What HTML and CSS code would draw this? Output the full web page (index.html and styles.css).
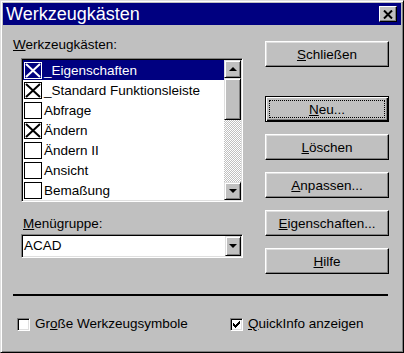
FILE: index.html
```html
<!DOCTYPE html>
<html>
<head lang="de">
    <meta charset="UTF-8">
    <title>Werkzeugkästen</title>
    <link rel="stylesheet" href="styles.css">
</head>
<body>
<div class="window">
    <div class="titlebar">
        <span class="title">Werkzeugkästen</span>
        <span class="close">
            <svg width="10" height="9" viewBox="0 0 10 9"><path d="M1 0.5L9 8.5M9 0.5L1 8.5"/></svg>
        </span>
    </div>
    <div class="content">
        <div class="left">
            <div class="label"><u>W</u>erkzeugkästen:</div>
            <div class="listbox">
                <ul class="items">
                    <li class="item selected"><span class="check"><svg viewBox="0 0 16 15"><path d="M1 1L15 14M15 1L1 14"/></svg></span><span>_Eigenschaften</span></li>
                    <li class="item"><span class="check"><svg viewBox="0 0 16 15"><path d="M1 1L15 14M15 1L1 14"/></svg></span><span>_Standard Funktionsleiste</span></li>
                    <li class="item"><span class="check"></span><span>Abfrage</span></li>
                    <li class="item"><span class="check"><svg viewBox="0 0 16 15"><path d="M1 1L15 14M15 1L1 14"/></svg></span><span>Ändern</span></li>
                    <li class="item"><span class="check"></span><span>Ändern II</span></li>
                    <li class="item"><span class="check"></span><span>Ansicht</span></li>
                    <li class="item"><span class="check"></span><span>Bemaßung</span></li>
                </ul>
                <div class="scrollbar">
                    <div class="sb-btn"><span class="arrow-up"></span></div>
                    <div class="sb-thumb"></div>
                    <div class="sb-track"></div>
                    <div class="sb-btn"><span class="arrow-down"></span></div>
                </div>
            </div>
            <div class="label menu-label"><u>M</u>enügruppe:</div>
            <div class="combo">
                <span class="combo-value">ACAD</span>
                <span class="combo-btn"><span class="arrow-down"></span></span>
            </div>
        </div>
        <div class="buttons">
            <button class="btn"><span><u>S</u>chließen</span></button>
            <button class="btn default"><span class="focus"><span><u>N</u>eu...</span></span></button>
            <button class="btn"><span><u>L</u>öschen</span></button>
            <button class="btn"><span><u>A</u>npassen...</span></button>
            <button class="btn"><span><u>E</u>igenschaften...</span></button>
            <button class="btn"><span><u>H</u>ilfe</span></button>
        </div>
    </div>
    <div class="separator"></div>
    <div class="options">
        <label class="opt first"><span class="cb"></span><span>Gr<u>o</u>ße Werkzeugsymbole</span></label>
        <label class="opt"><span class="cb"><svg width="7" height="7" viewBox="0 0 7 7"><path d="M0 2h1v1h1v1h1v-1h1v-1h1v-1h1v-1h1v3h-1v1h-1v1h-1v1h-1v1h-1v-1h-1v-1h-1z"/></svg></span><span><u>Q</u>uickInfo anzeigen</span></label>
    </div>
</div>
</body>
</html>
```

FILE: styles.css
```css
* {
    margin: 0;
    padding: 0;
    box-sizing: border-box;
}

body {
    background: #c0c0c0;
    font-family: "Liberation Sans", Arial, sans-serif;
    font-size: 13.5px;
    color: #000;
}

u {
    text-decoration: underline;
    text-underline-offset: 1px;
}

.window {
    width: 404px;
    height: 353px;
    border: 1px solid;
    border-color: #dfdfdf #000 #000 #dfdfdf;
    box-shadow: inset 1px 1px #fff, inset -1px -1px #808080;
    padding: 2px;
    background: #c0c0c0;
}

.titlebar {
    height: 22px;
    background: #000080;
    color: #fff;
    display: flex;
    align-items: center;
    justify-content: space-between;
    padding: 0 4px 0 3px;
}

.title {
    font-size: 18px;
    line-height: 22px;
}

.close {
    width: 18px;
    height: 16px;
    background: #c0c0c0;
    border: 1px solid;
    border-color: #fff #000 #000 #fff;
    box-shadow: inset -1px -1px #808080;
    display: flex;
    align-items: center;
    justify-content: center;
}

.close svg {
    stroke: #000;
    stroke-width: 2;
}

.content {
    display: flex;
    gap: 22px;
    padding: 12px 0 0 10px;
}

.left {
    width: 230px;
}

.label {
    line-height: 16px;
}

.menu-label {
    margin-top: 14px;
    padding-left: 10px;
}

.listbox {
    margin: 5px 0 0 8px;
    width: 222px;
    height: 144px;
    border: 1px solid;
    border-color: #808080 #fff #fff #808080;
    box-shadow: inset 1px 1px #000, inset -1px -1px #dfdfdf;
    padding: 1px;
    background: #fff;
    display: flex;
}

.items {
    list-style: none;
    flex: 1;
    overflow: hidden;
}

.item {
    height: 20px;
    display: flex;
    align-items: center;
    gap: 2px;
    padding-left: 1px;
    white-space: nowrap;
}

.item.selected {
    background: #000080;
    color: #fff;
}

.check {
    width: 18px;
    height: 17px;
    border: 1px solid currentColor;
    display: flex;
}

.check svg {
    width: 100%;
    height: 100%;
    stroke: currentColor;
    stroke-width: 2;
}

.scrollbar {
    width: 17px;
    display: flex;
    flex-direction: column;
}

.sb-btn,
.sb-thumb,
.combo-btn {
    background: #c0c0c0;
    border: 1px solid;
    border-color: #dfdfdf #000 #000 #dfdfdf;
    box-shadow: inset 1px 1px #fff, inset -1px -1px #808080;
}

.sb-btn {
    height: 18px;
    display: flex;
    align-items: center;
    justify-content: center;
}

.sb-thumb {
    height: 42px;
}

.sb-track {
    flex: 1;
    background: repeating-conic-gradient(#c0c0c0 0 25%, #fff 0 50%) 0 0 / 2px 2px;
}

.arrow-up,
.arrow-down {
    width: 0;
    height: 0;
    border-left: 4px solid transparent;
    border-right: 4px solid transparent;
}

.arrow-up {
    border-bottom: 4px solid #000;
}

.arrow-down {
    border-top: 4px solid #000;
}

.combo {
    margin: 2px 0 0 8px;
    width: 222px;
    height: 24px;
    border: 1px solid;
    border-color: #808080 #fff #fff #808080;
    box-shadow: inset 1px 1px #000, inset -1px -1px #dfdfdf;
    padding: 1px;
    background: #fff;
    display: flex;
}

.combo-value {
    flex: 1;
    padding-left: 1px;
    line-height: 20px;
}

.combo-btn {
    width: 16px;
    display: flex;
    align-items: center;
    justify-content: center;
}

.buttons {
    width: 124px;
    margin-top: 4px;
    display: flex;
    flex-direction: column;
    gap: 12px;
}

.btn {
    height: 26px;
    font: inherit;
    color: #000;
    background: #c0c0c0;
    border: 1px solid;
    border-color: #fff #000 #000 #fff;
    box-shadow: inset -1px -1px #808080, inset 1px 1px #dfdfdf;
    display: flex;
    align-items: center;
    justify-content: center;
}

.btn.default {
    margin-top: 17px;
    border-color: #000;
    box-shadow: inset 1px 1px #fff, inset -1px -1px #000, inset -2px -2px #808080;
    padding: 3px;
    align-items: stretch;
}

.focus {
    flex: 1;
    border: 1px dotted #000;
    display: flex;
    align-items: center;
    justify-content: center;
}

.separator {
    margin: 20px 13px 0 10px;
    height: 2px;
    background: #000;
}

.options {
    display: flex;
    margin-top: 20px;
    padding-left: 14px;
    line-height: 16px;
}

.opt {
    display: flex;
    align-items: center;
    gap: 5px;
}

.opt.first {
    width: 213px;
}

.cb {
    width: 13px;
    height: 13px;
    border: 1px solid;
    border-color: #808080 #fff #fff #808080;
    box-shadow: inset 1px 1px #000, inset -1px -1px #dfdfdf;
    background: #fff;
    display: flex;
    align-items: center;
    justify-content: center;
}
```
